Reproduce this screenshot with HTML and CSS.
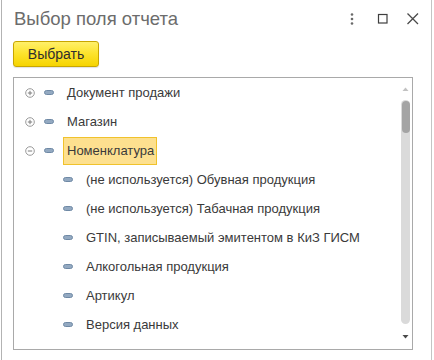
FILE: index.html
```html
<!DOCTYPE html>
<html lang="ru">
<head>
<meta charset="utf-8">
<title>Выбор поля отчета</title>
<link rel="stylesheet" href="styles.css">
</head>
<body>
<div class="window">
  <div class="header">
    <div class="title">Выбор поля отчета</div>
    <div class="hicons">
      <svg class="ic-kebab" width="10" height="20" viewBox="0 0 10 20"><circle cx="5" cy="5.5" r="1.3"/><circle cx="5" cy="10" r="1.3"/><circle cx="5" cy="14.5" r="1.3"/></svg>
      <svg class="ic-max" width="20" height="20" viewBox="0 0 20 20"><rect x="5.5" y="5.5" width="8.5" height="8.5"/></svg>
      <svg class="ic-close" width="20" height="20" viewBox="0 0 20 20"><path d="M4.5 4.5 L15 15 M15 4.5 L4.5 15"/></svg>
    </div>
  </div>
  <div class="toolbar">
    <button class="btn">Выбрать</button>
  </div>
  <div class="tree">
    <div class="list">
      <div class="row top">
        <svg class="exp" width="10" height="10" viewBox="0 0 10 10"><circle cx="5" cy="5" r="4.3"/><path d="M2.8 5 H7.2 M5 2.8 V7.2"/></svg>
        <svg class="fld" width="10" height="5" viewBox="0 0 10 5"><rect x="0.5" y="0.5" width="9" height="4" rx="2"/></svg>
        <span class="lbl">Документ продажи</span>
      </div>
      <div class="row top">
        <svg class="exp" width="10" height="10" viewBox="0 0 10 10"><circle cx="5" cy="5" r="4.3"/><path d="M2.8 5 H7.2 M5 2.8 V7.2"/></svg>
        <svg class="fld" width="10" height="5" viewBox="0 0 10 5"><rect x="0.5" y="0.5" width="9" height="4" rx="2"/></svg>
        <span class="lbl">Магазин</span>
      </div>
      <div class="row top">
        <svg class="exp" width="10" height="10" viewBox="0 0 10 10"><circle cx="5" cy="5" r="4.3"/><path d="M2.8 5 H7.2"/></svg>
        <svg class="fld sel-gap" width="10" height="5" viewBox="0 0 10 5"><rect x="0.5" y="0.5" width="9" height="4" rx="2"/></svg>
        <span class="lbl selected">Номенклатура</span>
      </div>
      <div class="row child">
        <svg class="fld" width="10" height="5" viewBox="0 0 10 5"><rect x="0.5" y="0.5" width="9" height="4" rx="2"/></svg>
        <span class="lbl">(не используется) Обувная продукция</span>
      </div>
      <div class="row child">
        <svg class="fld" width="10" height="5" viewBox="0 0 10 5"><rect x="0.5" y="0.5" width="9" height="4" rx="2"/></svg>
        <span class="lbl">(не используется) Табачная продукция</span>
      </div>
      <div class="row child">
        <svg class="fld" width="10" height="5" viewBox="0 0 10 5"><rect x="0.5" y="0.5" width="9" height="4" rx="2"/></svg>
        <span class="lbl">GTIN, записываемый эмитентом в КиЗ ГИСМ</span>
      </div>
      <div class="row child">
        <svg class="fld" width="10" height="5" viewBox="0 0 10 5"><rect x="0.5" y="0.5" width="9" height="4" rx="2"/></svg>
        <span class="lbl">Алкогольная продукция</span>
      </div>
      <div class="row child">
        <svg class="fld" width="10" height="5" viewBox="0 0 10 5"><rect x="0.5" y="0.5" width="9" height="4" rx="2"/></svg>
        <span class="lbl">Артикул</span>
      </div>
      <div class="row child">
        <svg class="fld" width="10" height="5" viewBox="0 0 10 5"><rect x="0.5" y="0.5" width="9" height="4" rx="2"/></svg>
        <span class="lbl">Версия данных</span>
      </div>
    </div>
    <div class="scroll">
      <svg class="arr up" width="9" height="6" viewBox="0 0 9 6"><path d="M1.5 5 L4.5 1.5 L7.5 5 Z"/></svg>
      <div class="track"><div class="thumb"></div></div>
      <svg class="arr down" width="9" height="6" viewBox="0 0 9 6"><path d="M1.5 1 L4.5 4.5 L7.5 1 Z"/></svg>
    </div>
  </div>
</div>
</body>
</html>
```

FILE: styles.css
```css
* { box-sizing: border-box; }
html, body { margin: 0; padding: 0; background: #ffffff; }
body { font-family: "Liberation Sans", Arial, sans-serif; }

.window {
  margin-left: 1px;
  width: 431px;
  height: 360px;
  border-left: 1px solid #b3b3b3;
  border-right: 1px solid #c4c4c4;
  background: #ffffff;
  overflow: hidden;
}

.header {
  height: 38px;
  display: flex;
  align-items: flex-start;
  padding: 9px 8px 0 12px;
}
.title {
  font-size: 18.5px;
  line-height: 20px;
  color: #6c6c6c;
  white-space: nowrap;
}
.hicons {
  margin-left: auto;
  display: flex;
  align-items: center;
  height: 20px;
}
.ic-kebab { fill: #6a6a6a; margin-right: 16px; }
.ic-max { fill: none; stroke: #3f3f3f; stroke-width: 1.2; margin-right: 10px; }
.ic-close { fill: none; stroke: #4a4a4a; stroke-width: 1.3; }

.toolbar {
  padding: 3px 0 0 11px;
  height: 39px;
}
.btn {
  width: 86px;
  height: 26px;
  margin: 0;
  padding: 0;
  border: 1px solid #c8a600;
  border-radius: 3px;
  background: linear-gradient(#fff06a 0%, #fde430 45%, #f6d400 100%);
  font-family: "Liberation Sans", Arial, sans-serif;
  font-size: 14px;
  color: #2e2e2e;
  box-shadow: 0 1px 1px rgba(0,0,0,0.12);
}

.tree {
  margin-left: 11px;
  width: 400px;
  height: 273px;
  border: 1px solid #a9a9a9;
  display: flex;
}
.list {
  flex: 1;
  overflow: hidden;
}
.row {
  height: 29px;
  display: flex;
  align-items: center;
  font-size: 13px;
  color: #3a3a3a;
  white-space: nowrap;
}
.row.top { padding-left: 11px; }
.row.child { padding-left: 49px; }

.exp { fill: none; stroke: #9a9a9a; stroke-width: 1; margin-right: 9px; flex: none; }
.exp path { stroke: #7c7c7c; }
.fld { fill: #93a9c1; stroke: #6f89a5; stroke-width: 1; margin-right: 13px; flex: none; }
.fld.sel-gap { margin-right: 9px; }

.lbl { line-height: 16px; }
.lbl.selected {
  display: inline-flex;
  align-items: center;
  height: 28px;
  padding: 0 2px 0 3px;
  background: #fde08f;
  border: 1px solid #f0c22c;
}

.scroll {
  width: 13px;
  display: flex;
  flex-direction: column;
  align-items: center;
  padding: 8px 0 9px 0;
}
.arr { flex: none; }
.arr.up { fill: #c2c2c2; margin-bottom: 8px; }
.arr.down { fill: #4a4a4a; margin-top: 10px; }
.track {
  flex: 1;
  width: 9px;
  border-radius: 4.5px;
  background: #dadada;
  padding-top: 1px;
}
.thumb {
  width: 8px;
  margin-left: 1px;
  height: 32px;
  border-radius: 4px;
  background: #a4a4a4;
}
```
